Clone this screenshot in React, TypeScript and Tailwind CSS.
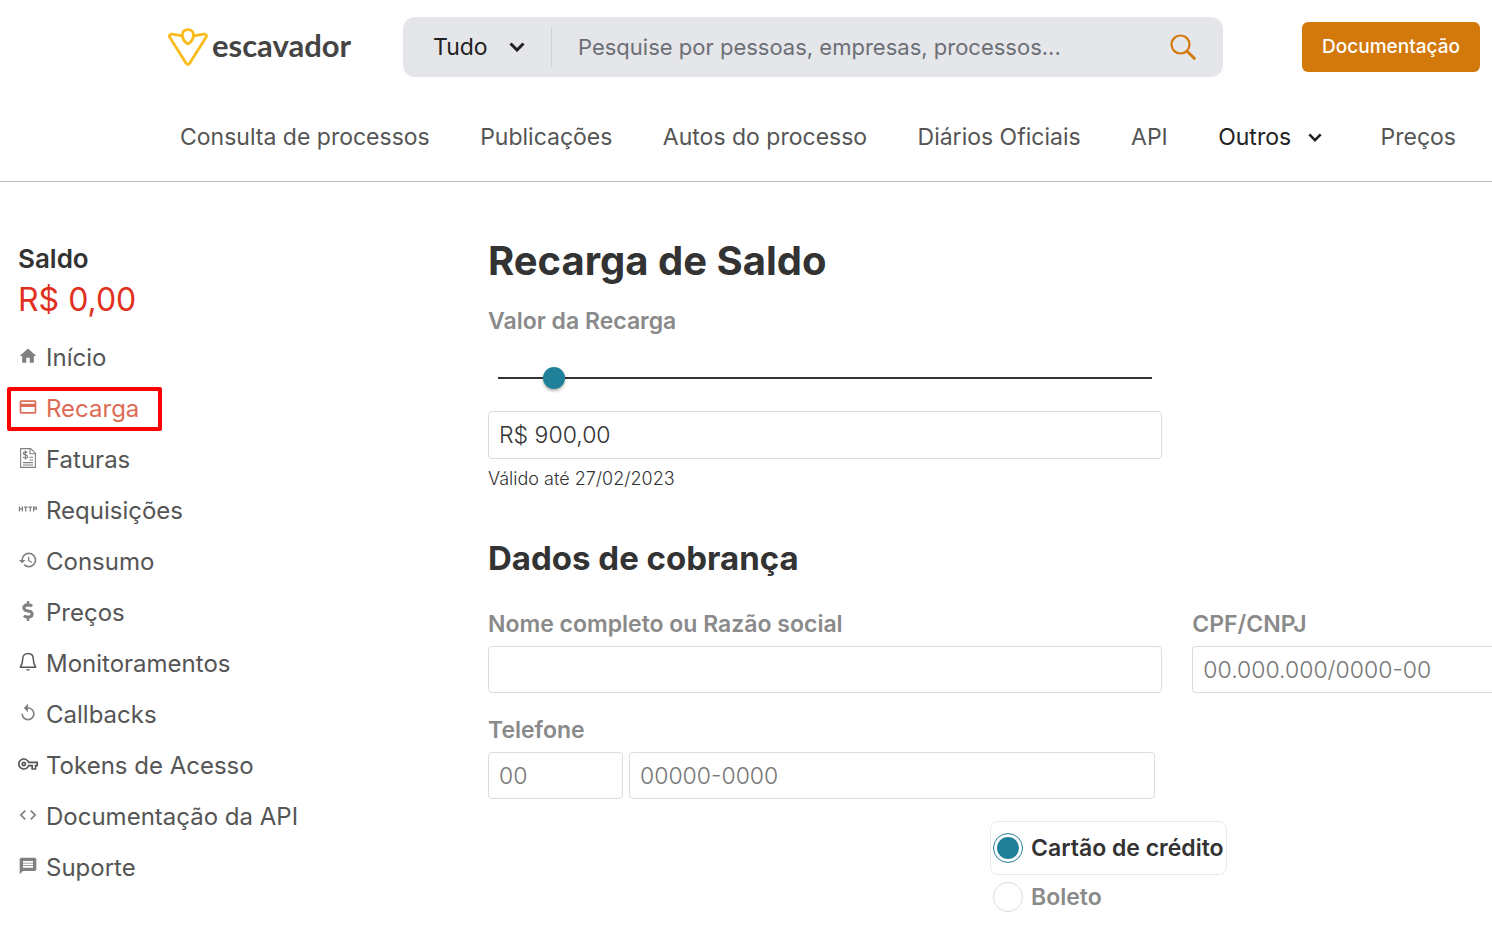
import React from "react";
import {
  MdHome,
  MdPayment,
  MdHttp,
  MdHistory,
  MdReplay,
  MdOutlineVpnKey,
  MdCode,
  MdMessage,
} from "react-icons/md";
import { FaDollarSign } from "react-icons/fa";

type IconProps = { className?: string };

type MenuItem = {
  label: string;
  icon: React.ComponentType<IconProps>;
  iconClass: string;
  active?: boolean;
};

function InvoiceIcon({ className }: IconProps) {
  return (
    <svg viewBox="0 0 20 20" fill="none" stroke="currentColor" className={className} aria-hidden="true">
      <path d="M2.600.6h10l4.800 4.600v14.200H2.600Z" strokeWidth="1.100" />
      <path d="M12 .8v5h5.200" strokeWidth="1.100" />
      <path d="M9.300 4.700c-.5-.7-1.300-1-2.100-.9-1.200.1-1.900.8-1.800 1.600.2 1.900 4.200 1 4.200 3.100 0 1-1 1.600-2.100 1.600-1 0-1.900-.4-2.400-1.100M7.400 2.500v9" strokeWidth="1.200" />
      <path d="M11.500 9.200h3.500M11.500 12h3.500M5 14.600h10M5 17h10" strokeWidth="1.100" />
    </svg>
  );
}

function BellIcon({ className }: IconProps) {
  return (
    <svg viewBox="0 0 20 20" fill="none" stroke="currentColor" strokeWidth="1.500" strokeLinejoin="round" className={className} aria-hidden="true">
      <path d="M10 1.500c-3.300 0-5.300 2.300-5.300 5.400 0 4-.5 5.400-2.400 8.300h15.400C15.800 12.300 15.300 10.900 15.300 6.900c0-3.100-2-5.400-5.300-5.400Z" />
      <path d="M8 17.300c.3.900 1.100 1.400 2 1.400s1.700-.5 2-1.400Z" fill="currentColor" stroke="none" />
    </svg>
  );
}

const menu: MenuItem[] = [
  { label: "Início", icon: MdHome, iconClass: "size-5 text-[#808080]" },
  { label: "Recarga", icon: MdPayment, iconClass: "size-5 text-[#dd6b55]", active: true },
  { label: "Faturas", icon: InvoiceIcon, iconClass: "size-5 text-[#808080]" },
  { label: "Requisições", icon: MdHttp, iconClass: "size-5 text-[#808080]" },
  { label: "Consumo", icon: MdHistory, iconClass: "size-5 text-[#808080]" },
  { label: "Preços", icon: FaDollarSign, iconClass: "size-5 text-[#808080]" },
  { label: "Monitoramentos", icon: BellIcon, iconClass: "size-5 text-[#555555]" },
  { label: "Callbacks", icon: MdReplay, iconClass: "size-5 text-[#808080]" },
  { label: "Tokens de Acesso", icon: MdOutlineVpnKey, iconClass: "size-5 text-[#555555]" },
  { label: "Documentação da API", icon: MdCode, iconClass: "size-5 text-[#808080]" },
  { label: "Suporte", icon: MdMessage, iconClass: "size-5 text-[#808080]" },
];

const inputClass =
  "block w-full min-w-0 rounded border border-[#dcdcdc] bg-white px-[10px] text-[23px] font-light text-[#333333] outline-none placeholder:text-[#777777]";
const labelClass = "block text-[23px] leading-8 font-semibold text-[#8a8a8a]";

function Chevron({ className }: IconProps) {
  return (
    <svg viewBox="0 0 16 10" fill="none" stroke="currentColor" strokeWidth="3" className={className} aria-hidden="true">
      <path d="M1.500 1.500 8 8l6.500-6.500" />
    </svg>
  );
}

function Logo() {
  return (
    <a href="#" className="flex w-[185px] shrink-0 items-center gap-[4px] whitespace-nowrap">
      <svg viewBox="0 0 40 40" fill="none" stroke="#f9bc1c" strokeWidth="2.800" strokeLinejoin="round" className="size-10 shrink-0" aria-hidden="true">
        <path d="M14.300 8.800 4.200 7.200C1.800 6.900.8 8.700 1.900 10.600L18.200 36.400c.9 1.400 2.400 1.400 3.300 0L37.900 10.600c1.200-1.900.2-3.700-2.200-3.400L25.500 8.800" />
        <path d="M19.900 2.600c-3.300 0-5.700 2.200-5.600 5.300.1 3.700 2.200 7.200 5.600 9 3.400-1.800 5.500-5.300 5.600-9 .1-3.100-2.300-5.300-5.600-5.300Z" />
      </svg>
      <span className="pb-1 font-['Lato',sans-serif] text-[31px] leading-9 font-bold text-[#444444]">escavador</span>
    </a>
  );
}

function Header() {
  return (
    <header className="border-b border-[#b9bec4] pt-[17px]">
      <div className="flex items-center pr-3 pl-[168px]">
        <Logo />
        <form className="ml-[50px] flex h-[60px] min-w-0 flex-1 items-center rounded-xl bg-[#e5e6ea]" onSubmit={(e) => e.preventDefault()}>
          <div className="relative flex h-10 w-[149px] shrink-0 items-center border-r border-[#cfd1d6]">
            <select aria-label="Tipo de busca" className="h-10 w-full appearance-none bg-transparent pl-[30px] text-[23px] text-[#222222] outline-none">
              <option>Tudo</option>
            </select>
            <Chevron className="pointer-events-none absolute right-[26px] h-[10px] w-4 text-[#222222]" />
          </div>
          <input
            type="search"
            aria-label="Pesquisar"
            placeholder="Pesquise por pessoas, empresas, processos..."
            className="h-10 min-w-0 flex-1 bg-transparent pl-[26px] text-[22px] text-[#333333] outline-none placeholder:text-[#6c6f75]"
          />
          <button type="submit" aria-label="Buscar" className="mr-[26px] shrink-0 text-[#d3790b]">
            <svg viewBox="0 0 28 28" fill="none" stroke="currentColor" strokeWidth="2.200" className="size-7" aria-hidden="true">
              <circle cx="11.500" cy="11.500" r="9" />
              <path d="m17.900 17.900 8.300 8.300" strokeWidth="2.800" />
            </svg>
          </button>
        </form>
        <a href="#" className="ml-[79px] flex h-[50px] w-[178px] shrink-0 items-center justify-center rounded-md bg-[#d3790b] text-[19px] font-medium text-white">
          Documentação
        </a>
      </div>
      <nav className="flex items-center justify-between pt-[44px] pr-9 pb-[28px] pl-[180px] text-[23px] leading-8 whitespace-nowrap text-[#555555]">
        <a href="#">Consulta de processos</a>
        <a href="#">Publicações</a>
        <a href="#">Autos do processo</a>
        <a href="#">Diários Oficiais</a>
        <a href="#">API</a>
        <button type="button" className="flex items-center gap-[17px] pr-2 text-[#222222]">
          Outros
          <Chevron className="h-[9px] w-[14px]" />
        </button>
        <a href="#">Preços</a>
      </nav>
    </header>
  );
}

function Sidebar() {
  return (
    <aside className="w-[470px] shrink-0 pt-[61px]">
      <h2 className="text-[26px] leading-8 font-semibold text-[#333333]">Saldo</h2>
      <p className="mt-[5px] text-[32px] leading-10 text-[#e03020]">R$ 0,00</p>
      <ul className="mt-3">
        {menu.map(({ label, icon: Icon, iconClass, active }) => (
          <li key={label}>
            <a
              href="#"
              className={
                active
                  ? "relative flex h-[51px] items-center text-2xl text-[#dd6b55]"
                  : "flex h-[51px] items-center text-2xl text-[#555555]"
              }
            >
              <span className="mr-2 flex w-5 shrink-0 items-center justify-center pb-[3px]">
                <Icon className={`${iconClass} shrink-0`} />
              </span>
              {label}
              {active && <span className="absolute top-[4px] -left-[11px] h-[44px] w-[155px] rounded-xs border-4 border-[#ff0000]" />}
            </a>
          </li>
        ))}
      </ul>
    </aside>
  );
}

const radioClass =
  "size-[30px] shrink-0 appearance-none rounded-full border border-[#dcdcdc] bg-white p-[3px] bg-clip-content checked:border-[#1f8099] checked:bg-[#1f8099]";

function RechargeForm() {
  return (
    <form className="min-w-0 flex-1 pt-[55px]" onSubmit={(e) => e.preventDefault()}>
      <div className="grid grid-cols-[9fr_4fr] gap-x-[30px]">
        <div>
          <h1 className="text-[40px] leading-[48px] font-bold whitespace-nowrap text-[#333333]">Recarga de Saldo</h1>
          <label htmlFor="valor" className={`${labelClass} mt-5`}>Valor da Recarga</label>
          <div className="mt-[29px] flex h-6 items-center px-[10px]">
            <input
              type="range"
              aria-label="Valor da recarga"
              min={200}
              max={10000}
              step={100}
              defaultValue={900}
              className="h-6 w-full appearance-none bg-transparent [&::-webkit-slider-runnable-track]:h-[2px] [&::-webkit-slider-runnable-track]:bg-[#333333] [&::-webkit-slider-thumb]:-mt-[10px] [&::-webkit-slider-thumb]:size-[22px] [&::-webkit-slider-thumb]:appearance-none [&::-webkit-slider-thumb]:rounded-full [&::-webkit-slider-thumb]:bg-[#1f8099] [&::-webkit-slider-thumb]:shadow-[0_2px_3px_rgba(0,0,0,0.3)]"
            />
          </div>
          <input id="valor" defaultValue="R$ 900,00" className={`${inputClass} mt-[21px] h-12`} />
          <p className="mt-2 text-lg leading-6 font-light text-[#333333]">Válido até 27/02/2023</p>
        </div>
      </div>

      <h2 className="mt-[47px] text-[33px] leading-10 font-bold text-[#333333]">Dados de cobrança</h2>
      <div className="mt-[30px] grid grid-cols-[9fr_4fr] gap-x-[30px]">
        <div>
          <label htmlFor="nome" className={labelClass}>Nome completo ou Razão social</label>
          <input id="nome" className={`${inputClass} mt-[6px] h-[47px]`} />
        </div>
        <div>
          <label htmlFor="cpf" className={labelClass}>CPF/CNPJ</label>
          <input id="cpf" placeholder="00.000.000/0000-00" className={`${inputClass} mt-[6px] h-[47px] rounded-r-none border-r-0`} />
        </div>
        <div className="mt-[21px] pr-[7px]">
          <label htmlFor="ddd" className={labelClass}>Telefone</label>
          <div className="mt-[6px] grid grid-cols-[135px_1fr] gap-[6px]">
            <input id="ddd" placeholder="00" className={`${inputClass} h-[47px]`} />
            <input aria-label="Número do telefone" placeholder="00000-0000" className={`${inputClass} h-[47px]`} />
          </div>
        </div>
      </div>

      <div className="mt-[22px] ml-[50%] flex w-fit flex-col items-start gap-[7px] text-[23px] font-semibold whitespace-nowrap">
        <label className="flex h-[54px] items-center gap-2 rounded-lg border border-dotted border-[#d4d4d4] px-[2px] text-[#333333]">
          <input type="radio" name="pagamento" defaultChecked className={radioClass} />
          Cartão de crédito
        </label>
        <label className="flex h-[30px] items-center gap-2 px-[3px] text-[#8a8a8a]">
          <input type="radio" name="pagamento" className={radioClass} />
          Boleto
        </label>
      </div>
    </form>
  );
}

export default function App() {
  return (
    <div className="bg-white font-['Inter',sans-serif]">
      <Header />
      <main className="flex pb-4 pl-[18px]">
        <Sidebar />
        <RechargeForm />
      </main>
    </div>
  );
}
